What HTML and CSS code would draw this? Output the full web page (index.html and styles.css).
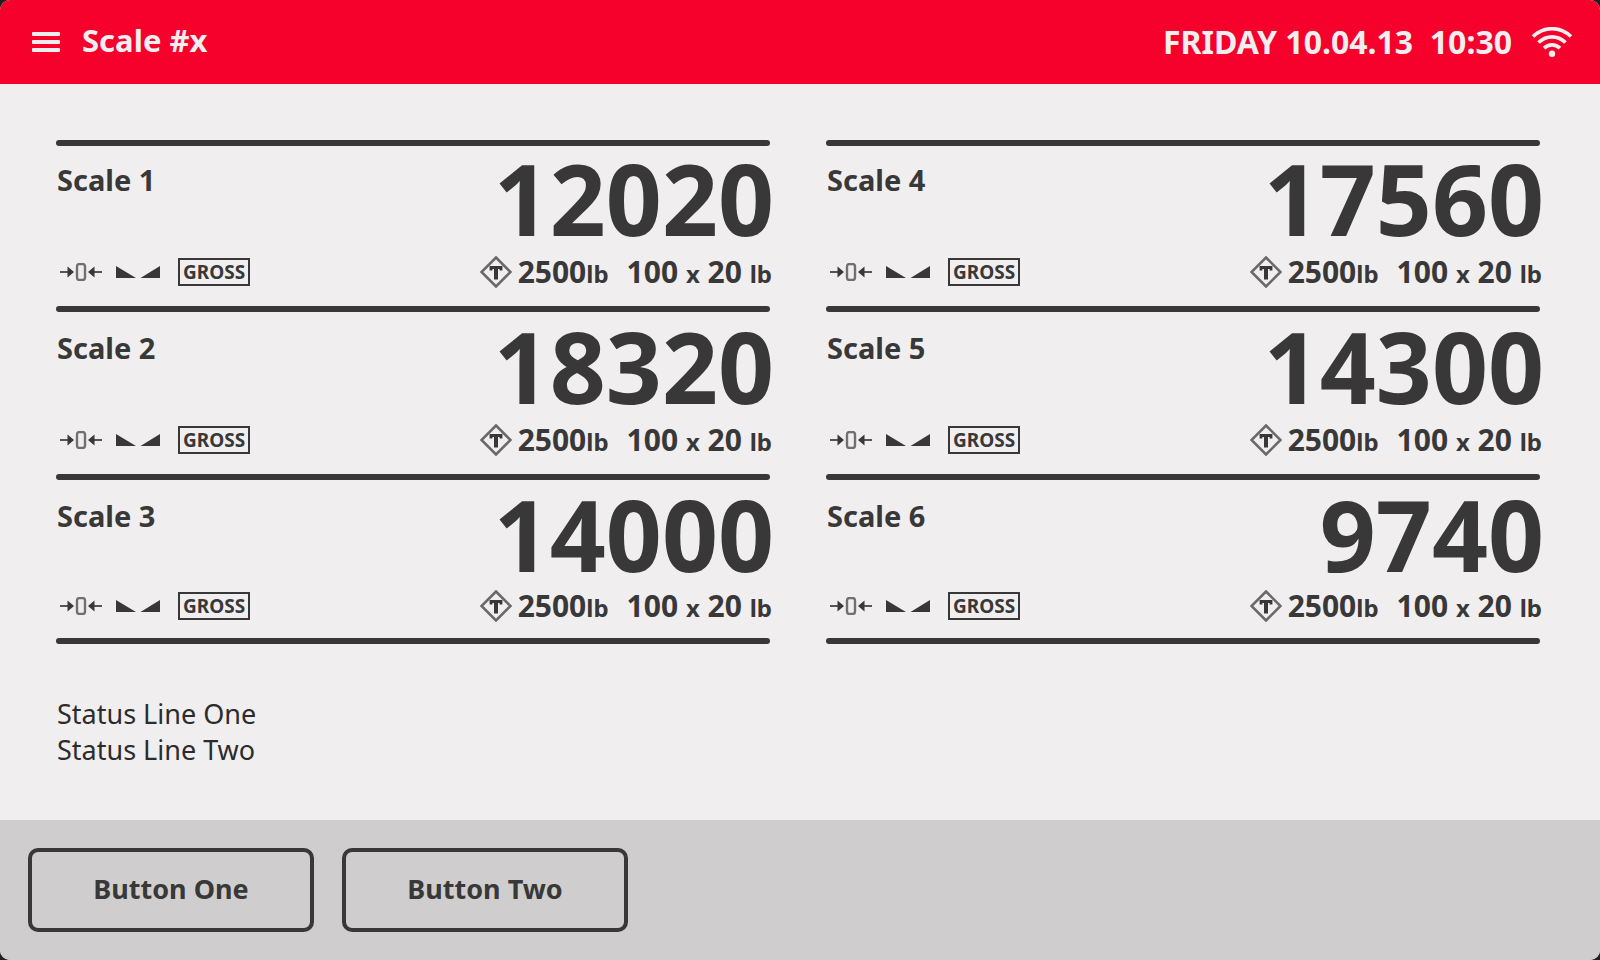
FILE: index.html
```html
<!DOCTYPE html>
<html lang="en">
<head>
<meta charset="utf-8">
<title>Scale #x</title>
<link rel="stylesheet" href="styles.css">
</head>
<body>
<svg class="sprite" aria-hidden="true">
  <symbol id="zero" viewBox="0 0 42 18">
    <path d="M0 9h9M33 9h9" fill="none" stroke="#555" stroke-width="2"/>
    <path d="M7.500 3.500v11l6.500-5.500zM34.500 3.500v11l-6.500-5.500z" fill="#383838"/>
    <rect x="17" y="1" width="8" height="16" rx="2.500" fill="none" stroke="#707070" stroke-width="2.400"/>
  </symbol>
  <symbol id="stable" viewBox="0 0 44 12">
    <path d="M0 0v12h20zM44 0v12H24.500z" fill="#383838"/>
  </symbol>
  <symbol id="tare" viewBox="0 0 32 32">
    <path d="M16 1.500L30.500 16 16 30.500 1.500 16z" fill="none" stroke="#6a6a6a" stroke-width="2.600"/>
    <path d="M11 14.500v-3h10v3" fill="none" stroke="#383838" stroke-width="2.800"/>
    <path d="M16 11.500v12" fill="none" stroke="#383838" stroke-width="4"/>
  </symbol>
</svg>
<div class="screen">
  <header class="topbar">
    <button class="menu" type="button" aria-label="Menu">
      <svg width="28" height="20" viewBox="0 0 28 20" fill="#f0eeef"><rect width="28" height="4" rx="1"/><rect y="8" width="28" height="4" rx="1"/><rect y="16" width="28" height="4" rx="1"/></svg>
    </button>
    <h1 class="title">Scale #x</h1>
    <time class="clock">FRIDAY 10.04.13&nbsp; 10:30</time>
    <svg class="wifi" width="40" height="30" viewBox="0 0 40 30" role="img" aria-label="Wi-Fi" fill="none" stroke="#f0eeef" stroke-width="3.700">
      <path d="M1 9.500Q9.500 1.700 20 1.700T39 9.500M6.500 15.500Q12.500 9.800 20 9.800T33.500 15.500M12 21.200Q15.500 17.800 20 17.800T28 21.200"/>
      <circle cx="20" cy="26.800" r="3.200" fill="#f0eeef" stroke="none"/>
    </svg>
  </header>
  <main class="content">
    <div class="scales">
      <div class="column">
        <section class="scale">
          <div class="reading"><h2 class="name">Scale 1</h2><output class="weight">12020</output></div>
          <div class="details"><svg class="zero" role="img" aria-label="Zero"><use href="#zero"/></svg><svg class="stable" role="img" aria-label="Stable"><use href="#stable"/></svg><span class="mode">GROSS</span><svg class="tare" role="img" aria-label="Tare"><use href="#tare"/></svg><span class="limit">2500<small>lb</small></span><span class="range">100 <small>x</small> 20 <small>lb</small></span></div>
        </section>
        <section class="scale">
          <div class="reading"><h2 class="name">Scale 2</h2><output class="weight">18320</output></div>
          <div class="details"><svg class="zero" role="img" aria-label="Zero"><use href="#zero"/></svg><svg class="stable" role="img" aria-label="Stable"><use href="#stable"/></svg><span class="mode">GROSS</span><svg class="tare" role="img" aria-label="Tare"><use href="#tare"/></svg><span class="limit">2500<small>lb</small></span><span class="range">100 <small>x</small> 20 <small>lb</small></span></div>
        </section>
        <section class="scale">
          <div class="reading"><h2 class="name">Scale 3</h2><output class="weight">14000</output></div>
          <div class="details"><svg class="zero" role="img" aria-label="Zero"><use href="#zero"/></svg><svg class="stable" role="img" aria-label="Stable"><use href="#stable"/></svg><span class="mode">GROSS</span><svg class="tare" role="img" aria-label="Tare"><use href="#tare"/></svg><span class="limit">2500<small>lb</small></span><span class="range">100 <small>x</small> 20 <small>lb</small></span></div>
        </section>
        <div class="rule"></div>
      </div>
      <div class="column">
        <section class="scale">
          <div class="reading"><h2 class="name">Scale 4</h2><output class="weight">17560</output></div>
          <div class="details"><svg class="zero" role="img" aria-label="Zero"><use href="#zero"/></svg><svg class="stable" role="img" aria-label="Stable"><use href="#stable"/></svg><span class="mode">GROSS</span><svg class="tare" role="img" aria-label="Tare"><use href="#tare"/></svg><span class="limit">2500<small>lb</small></span><span class="range">100 <small>x</small> 20 <small>lb</small></span></div>
        </section>
        <section class="scale">
          <div class="reading"><h2 class="name">Scale 5</h2><output class="weight">14300</output></div>
          <div class="details"><svg class="zero" role="img" aria-label="Zero"><use href="#zero"/></svg><svg class="stable" role="img" aria-label="Stable"><use href="#stable"/></svg><span class="mode">GROSS</span><svg class="tare" role="img" aria-label="Tare"><use href="#tare"/></svg><span class="limit">2500<small>lb</small></span><span class="range">100 <small>x</small> 20 <small>lb</small></span></div>
        </section>
        <section class="scale">
          <div class="reading"><h2 class="name">Scale 6</h2><output class="weight">9740</output></div>
          <div class="details"><svg class="zero" role="img" aria-label="Zero"><use href="#zero"/></svg><svg class="stable" role="img" aria-label="Stable"><use href="#stable"/></svg><span class="mode">GROSS</span><svg class="tare" role="img" aria-label="Tare"><use href="#tare"/></svg><span class="limit">2500<small>lb</small></span><span class="range">100 <small>x</small> 20 <small>lb</small></span></div>
        </section>
        <div class="rule"></div>
      </div>
    </div>
    <div class="status"><p>Status Line One</p><p>Status Line Two</p></div>
  </main>
  <footer class="actions">
    <button class="action" type="button">Button One</button>
    <button class="action" type="button">Button Two</button>
  </footer>
</div>
</body>
</html>
```

FILE: styles.css
```css
* { box-sizing: border-box; }
body {
  margin: 0;
  background: #222021;
  color: #383838;
  font-family: "Noto Sans", "Open Sans", sans-serif;
}
h1, h2, p { margin: 0; }
button { font-family: inherit; color: inherit; cursor: pointer; }
svg { display: block; flex: none; }
.sprite { display: none; }

.screen {
  display: flex;
  flex-direction: column;
  min-height: 100vh;
  border-radius: 10px;
  overflow: hidden;
  background: #f0eeef;
}

.topbar {
  display: flex;
  align-items: center;
  padding: 20px 28px 20px 32px;
  background: #f6002c;
  color: #f0eeef;
  line-height: 44px;
}
.menu { padding: 0; border: 0; background: none; }
.title { margin-left: 22px; font-size: 31px; line-height: 40px; padding-bottom: 4px; }
.clock { margin-left: auto; font-size: 32px; font-weight: 700; }
.wifi { margin-left: 20px; }

.content { flex: 1; padding: 56px 60px 0 56px; }
.scales { display: grid; grid-template-columns: 1fr 1fr; gap: 56px; }
.scale { position: relative; padding: 18px 0; }
.scale:first-child { padding-top: 16px; }
.scale::before, .rule {
  content: "";
  display: block;
  height: 6px;
  border-radius: 3px;
  background: #383838;
}
.scale::before { position: absolute; top: 0; left: 0; right: 0; }
.reading { display: flex; justify-content: space-between; align-items: flex-start; padding-left: 1px; }
.name { margin-top: 6px; font-size: 29px; line-height: 36px; }
.weight { margin-right: -4px; font-size: 98px; font-weight: 700; line-height: 84px; }
.details {
  display: flex;
  align-items: center;
  margin: 16px -2px 0 0;
  padding-left: 4px;
  font-size: 30px;
  font-weight: 700;
  line-height: 32px;
  white-space: nowrap;
}
.scale:nth-child(3) { padding-bottom: 16px; }
.scale:nth-child(3) .details { margin-top: 14px; }
.details small { font-size: 24px; line-height: 24px; }
.zero { width: 42px; height: 18px; }
.stable { width: 44px; height: 12px; margin-left: 14px; }
.mode {
  margin: 0 auto 0 18px;
  padding: 0 3px;
  border: 2px solid #383838;
  font-size: 19px;
  line-height: 24px;
}
.tare { width: 32px; height: 32px; }
.limit { margin-left: 6px; }
.range { margin-left: 18px; }

.status { margin-top: 52px; padding-left: 1px; color: #2c2c2c; font-size: 27px; line-height: 36px; }

.actions { display: flex; gap: 28px; padding: 28px; background: #cfcdce; }
.action {
  width: 286px;
  height: 84px;
  padding: 0 0 4px;
  border: 4px solid #383838;
  border-radius: 10px;
  background: none;
  font-size: 27px;
  font-weight: 700;
}
```
